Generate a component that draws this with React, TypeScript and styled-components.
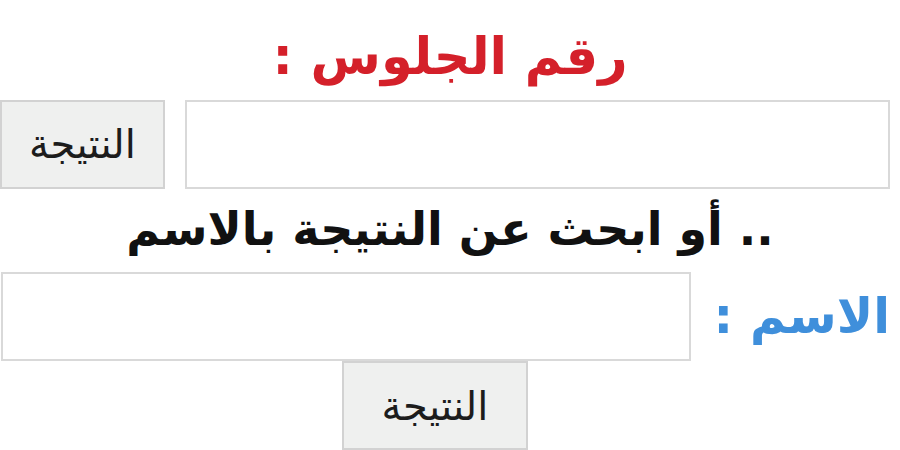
import React from 'react';
import styled, { createGlobalStyle } from 'styled-components';

const GlobalStyle = createGlobalStyle`
  html, body {
    margin: 0;
    padding: 0;
    background: #ffffff;
  }
  body {
    font-family: "DejaVu Sans", "Liberation Sans", sans-serif;
  }
`;

const Page = styled.div`
  direction: rtl;
  width: 900px;
  height: 450px;
  overflow: hidden;
  display: flex;
  flex-direction: column;
  align-items: center;
  padding-top: 22px;
  box-sizing: border-box;
`;

const Title = styled.h1<{ color: string }>`
  margin: 0;
  height: 78px;
  font-size: 51px;
  font-weight: 700;
  line-height: 70px;
  color: ${props => props.color};
`;

const Row = styled.div<{ gap: number }>`
  width: 100%;
  display: flex;
  align-items: center;
  gap: ${props => props.gap}px;
  padding-right: 10px;
  box-sizing: border-box;
`;

const TextBox = styled.input<{ boxWidth: number }>`
  flex-shrink: 0;
  width: ${props => props.boxWidth}px;
  height: 89px;
  box-sizing: border-box;
  border: 2px solid #d9d9d9;
  background: #ffffff;
  outline: none;
`;

const ResultButton = styled.button<{ buttonWidth: number; shift?: number }>`
  flex-shrink: 0;
  width: ${props => props.buttonWidth}px;
  height: 89px;
  margin-right: ${props => props.shift ?? 0}px;
  box-sizing: border-box;
  border: 2px solid #d2d2d2;
  background: #eff0ef;
  font-family: "DejaVu Sans", sans-serif;
  font-size: 40px;
  line-height: 1;
  color: #1c1c1c;
  padding: 0;
`;

const SubTitle = styled.p`
  margin: 0;
  height: 84px;
  line-height: 80px;
  font-size: 46px;
  font-weight: 700;
  color: #111111;
`;

const Label = styled.span`
  font-size: 49px;
  font-weight: 700;
  color: #3f8fdb;
  white-space: nowrap;
`;

export default function App() {
  return (
    <>
      <GlobalStyle />
      <Page>
        <Title color="#d4202a">رقم الجلوس :</Title>
        <Row gap={20}>
          <TextBox boxWidth={705} />
          <ResultButton buttonWidth={165}>النتيجة</ResultButton>
        </Row>
        <SubTitle>.. أو ابحث عن النتيجة بالاسم</SubTitle>
        <Row gap={22}>
          <Label>الاسم :</Label>
          <TextBox boxWidth={690} />
        </Row>
        <ResultButton buttonWidth={186} shift={30}>النتيجة</ResultButton>
      </Page>
    </>
  );
}
